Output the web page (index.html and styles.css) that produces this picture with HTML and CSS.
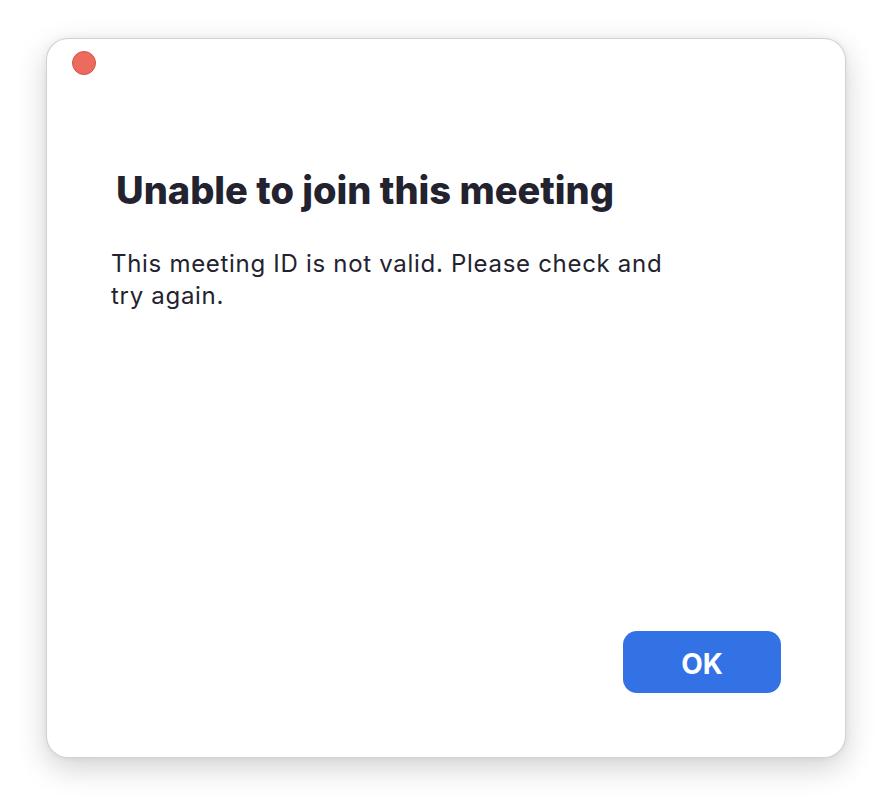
FILE: index.html
```html
<!DOCTYPE html>
<html>
<head>
<meta charset="utf-8">
<link rel="stylesheet" href="styles.css">
</head>
<body>
<div class="window">
  <div class="titlebar"><span class="close"></span></div>
  <div class="content">
    <h1 class="title">Unable to join this meeting</h1>
    <p class="message">This meeting ID is not valid. Please check and<br>try again.</p>
  </div>
  <div class="actions"><button class="ok">OK</button></div>
</div>
</body>
</html>
```
FILE: styles.css
```css
html, body {
  margin: 0;
  padding: 0;
  background: #ffffff;
}
body {
  font-family: Inter, "Noto Sans", sans-serif;
  padding: 38px 46px;
}
.window {
  width: 800px;
  height: 720px;
  box-sizing: border-box;
  background: #ffffff;
  border-radius: 22px;
  border: 1px solid rgba(0,0,0,0.18);
  box-shadow: 0 10px 30px rgba(0,0,0,0.18), 0 0 6px rgba(0,0,0,0.06);
  display: flex;
  flex-direction: column;
}
.titlebar {
  height: 50px;
  padding: 12px 0 0 25px;
  box-sizing: border-box;
}
.close {
  display: block;
  width: 24px;
  height: 24px;
  border-radius: 50%;
  box-sizing: border-box;
  background: #ed6a5e;
  border: 1px solid #d5544a;
}
.content {
  padding: 0 0 0 64px;
  flex: 1;
}
.title {
  margin: 78px 0 0 5px;
  font-size: 38px;
  font-weight: 800;
  line-height: 46px;
  color: #23222f;
  letter-spacing: 0;
}
.message {
  margin: 35px 0 0 0;
  font-size: 24px;
  line-height: 32px;
  letter-spacing: 0.7px;
  color: #23222f;
}
.actions {
  display: flex;
  justify-content: flex-end;
  padding: 0 64px 64px 0;
}
.ok {
  width: 158px;
  height: 62px;
  padding: 3px 0 0 0;
  border: none;
  border-radius: 14px;
  background: #3372e4;
  color: #ffffff;
  font-family: Inter, "Noto Sans", sans-serif;
  font-size: 28px;
  font-weight: 700;
}
```
